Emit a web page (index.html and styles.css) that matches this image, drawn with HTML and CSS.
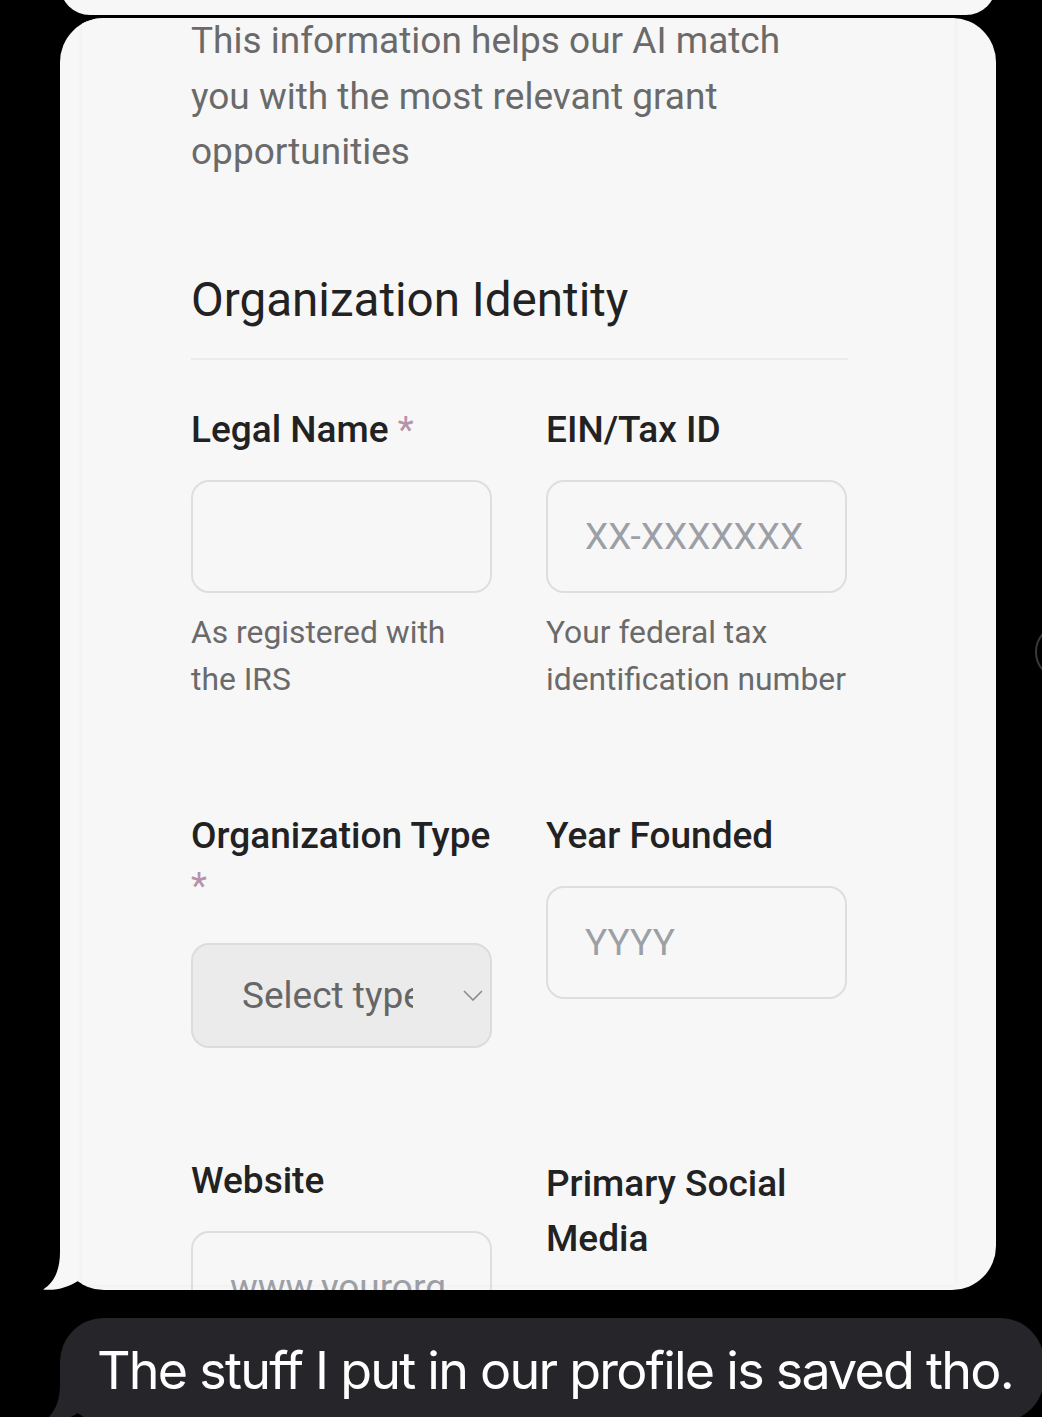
FILE: index.html
```html
<!DOCTYPE html>
<html lang="en">
<head>
<meta charset="utf-8">
<title>Messages</title>
<link rel="stylesheet" href="styles.css">
</head>
<body>
<div class="thread">
  <div class="prev-bubble"></div>

  <div class="msg msg-image">
    <svg class="tail" width="60" height="60" viewBox="0 0 60 60" aria-hidden="true">
      <path d="M18 0 L18 22 C18 40 12 53 1 59.5 C14 61 27 57 36 51 L60 20 L40 0 Z" fill="#f7f7f7"/>
    </svg>
    <div class="bubble-image">
      <div class="card">
        <p class="intro">This information helps our AI match you with the most relevant grant opportunities</p>
        <h2 class="section-title">Organization Identity</h2>
        <div class="fields">
          <div class="field">
            <div class="label">Legal Name <span class="req">*</span></div>
            <div class="input"></div>
            <p class="help">As registered with the IRS</p>
          </div>
          <div class="field">
            <div class="label">EIN/Tax ID</div>
            <div class="input"><span class="placeholder">XX-XXXXXXX</span></div>
            <p class="help">Your federal tax identification number</p>
          </div>
          <div class="field">
            <div class="label">Organization Type <span class="req">*</span></div>
            <div class="select">
              <span class="select-value">Select type</span>
              <svg class="chevron" width="20" height="11" viewBox="0 0 20 11" aria-hidden="true">
                <polyline points="1,1 10,10 19,1" fill="none" stroke="#8a8a8a" stroke-width="1.6"/>
              </svg>
            </div>
          </div>
          <div class="field">
            <div class="label">Year Founded</div>
            <div class="input"><span class="placeholder">YYYY</span></div>
          </div>
          <div class="field">
            <div class="label">Website</div>
            <div class="input"><span class="placeholder">www.yourorg.org</span></div>
          </div>
          <div class="field">
            <div class="label label-wide">Primary Social Media</div>
            <div class="input"><span class="placeholder">@yourorg</span></div>
          </div>
        </div>
      </div>
    </div>
  </div>

  <div class="msg msg-text">
    <svg class="tail" width="60" height="60" viewBox="0 0 60 60" aria-hidden="true">
      <path d="M18 0 L18 22 C18 40 12 53 1 59.5 C14 61 27 57 36 51 L60 20 L40 0 Z" fill="#262529"/>
    </svg>
    <div class="bubble-text">The stuff I put in our profile is saved tho.</div>
  </div>
</div>
<div class="side-ring"></div>
</body>
</html>
```

FILE: styles.css
```css
html, body {
  margin: 0;
  padding: 0;
}

body {
  width: 1042px;
  height: 1417px;
  background: #000;
  overflow: hidden;
  position: relative;
}

.thread {
  display: flex;
  flex-direction: column;
}

.prev-bubble {
  margin: -45px 0 0 60px;
  width: 936px;
  height: 60px;
  background: #f7f7f7;
  border-radius: 44px;
}

.msg {
  position: relative;
  margin-left: 60px;
}

.tail {
  position: absolute;
  left: -18px;
  bottom: 0;
  z-index: 0;
  display: block;
}

.msg-image {
  margin-top: 3px;
  width: 936px;
  height: 1272px;
}

.bubble-image {
  position: relative;
  z-index: 1;
  box-sizing: border-box;
  height: 100%;
  padding: 0 41px 0 22px;
  background: #f7f7f7;
  border-radius: 44px;
  overflow: hidden;
}

.card {
  box-sizing: border-box;
  height: 100%;
  padding-left: 109px;
  background: #f7f7f7;
  box-shadow: 0 0 5px rgba(0, 0, 0, 0.05);
  font-family: Roboto, "Noto Sans", sans-serif;
}

.intro {
  margin: -5px 0 0;
  max-width: 600px;
  font-size: 37px;
  line-height: 55.5px;
  color: #6a6a6a;
}

.section-title {
  margin: 92.5px 0 0;
  width: 657px;
  padding-bottom: 30px;
  border-bottom: 2px solid #ebebeb;
  font-size: 47.6px;
  line-height: 56px;
  font-weight: 400;
  color: #222;
}

.fields {
  margin-top: 45px;
  width: 656px;
  display: grid;
  grid-template-columns: 301px 301px;
  column-gap: 54px;
  row-gap: 108px;
  align-items: start;
}

.label {
  font-size: 37px;
  line-height: 50px;
  font-weight: 500;
  color: #222;
}

.label-wide {
  line-height: 55px;
}

.req {
  color: #b892a8;
  font-weight: 400;
}

.input {
  box-sizing: border-box;
  margin-top: 25px;
  height: 113px;
  padding: 0 36px 0 37px;
  border: 2px solid #dedede;
  border-radius: 18px;
  display: flex;
  align-items: center;
  overflow: hidden;
}

.placeholder {
  display: block;
  overflow: hidden;
  font-size: 37px;
  color: #9ca0a6;
  white-space: nowrap;
}

.help {
  margin: 16px 0 0;
  font-size: 31.8px;
  line-height: 47px;
  color: #6a6a6a;
}

.select {
  box-sizing: border-box;
  margin-top: 32px;
  height: 105px;
  padding-left: 49px;
  border: 2px solid #dcdcdc;
  border-radius: 18px;
  background: #ebebeb;
  display: flex;
  align-items: center;
}

.select-value {
  width: 171px;
  overflow: hidden;
  white-space: nowrap;
  font-size: 37px;
  color: #666;
}

.chevron {
  margin-left: 50px;
  display: block;
}

.msg-text {
  margin-top: 28px;
  width: 984px;
  height: 104px;
}

.bubble-text {
  position: relative;
  z-index: 1;
  box-sizing: border-box;
  height: 100%;
  padding-left: 37px;
  background: #262529;
  border-radius: 44px;
  display: flex;
  align-items: center;
  font-family: Inter, "Noto Sans", sans-serif;
  font-size: 52px;
  letter-spacing: -1.75px;
  color: #fff;
  white-space: nowrap;
}

.side-ring {
  position: absolute;
  left: 1035px;
  top: 624px;
  width: 56px;
  height: 56px;
  box-sizing: border-box;
  border: 2px solid #3a3a3a;
  border-radius: 50%;
}
```
